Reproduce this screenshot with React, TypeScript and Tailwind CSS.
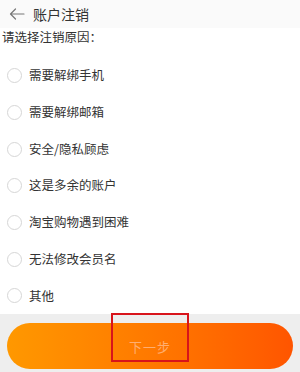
const reasons = [
  '需要解绑手机',
  '需要解绑邮箱',
  '安全/隐私顾虑',
  '这是多余的账户',
  '淘宝购物遇到困难',
  '无法修改会员名',
  '其他',
]

function BackArrow() {
  return (
    <svg width="16" height="12" viewBox="0 0 16 12" fill="none">
      <path d="M15 6H1.5M6.5 1L1.5 6l5 5" stroke="#777" strokeWidth="1.2" strokeLinecap="round" strokeLinejoin="round" />
    </svg>
  )
}

export default function App() {
  return (
    <div
      className="relative w-[300px] h-[372px] flex flex-col bg-white overflow-hidden"
      style={{ fontFamily: '"Noto Sans CJK SC", "Noto Sans", sans-serif' }}
    >
      {/* header */}
      <div className="h-[28px] flex items-center bg-[#fafafa] pl-[9px]">
        <BackArrow />
        <span className="ml-[8px] text-[14px] leading-none text-[#333]">账户注销</span>
      </div>

      <p className="h-[18px] leading-[18px] pl-[2px] text-[12.5px] text-[#333]">请选择注销原因：</p>

      {/* reasons */}
      <ul className="mt-[11.6px]">
        {reasons.map((r) => (
          <li key={r} className="h-[36.7px] flex items-center pl-[7px]">
            <span className="w-[15px] h-[15px] rounded-full border border-[#d6d6d6] bg-white" />
            <span className="ml-[7px] text-[12.5px] text-[#333]">{r}</span>
          </li>
        ))}
      </ul>

      {/* footer */}
      <div className="mt-auto h-[58px] bg-[#eeeeee] px-[7px] pt-[9px]">
        <button className="w-full h-[46px] rounded-full bg-gradient-to-r from-[#ff9800] to-[#ff5500] flex items-center justify-center">
          <span className="text-[13px] text-[#ffae70] tracking-[1px]">下一步</span>
        </button>
      </div>

      {/* red annotation box */}
      <div className="absolute left-[111px] top-[313px] w-[78px] h-[49px] border-2 border-[#d8141b]" />
    </div>
  )
}
